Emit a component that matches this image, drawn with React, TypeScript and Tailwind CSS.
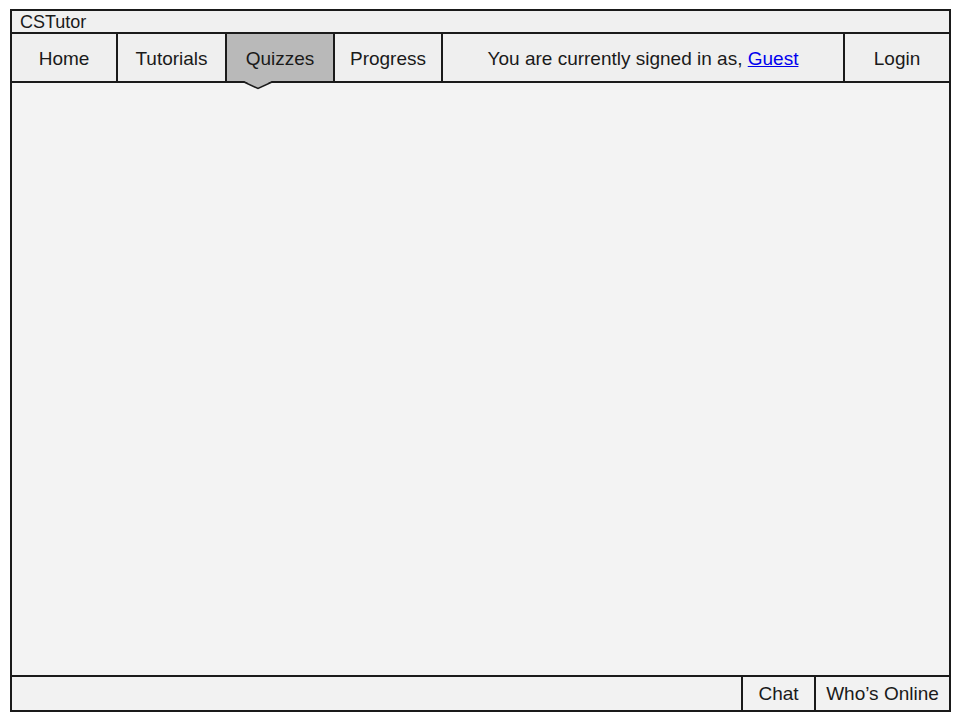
export default function App() {
  const tabs = [
    { label: 'Home', w: 'w-[106px]' },
    { label: 'Tutorials', w: 'w-[109px]' },
    { label: 'Quizzes', w: 'w-[108px]', active: true },
    { label: 'Progress', w: 'w-[108px]' },
  ]

  return (
    <div className="w-[960px] h-[720px] bg-white pt-[9px] pl-[10px] font-['Liberation_Sans',Arial,sans-serif] text-[#1a1a1a]">
      <div className="w-[941px] h-[703px] border-2 border-[#1a1a1a] bg-[#f3f3f3] flex flex-col">
        {/* title bar */}
        <div className="h-[23px] border-b-2 border-[#1a1a1a] bg-[#f0f0f0] pl-[8px] text-[18px] leading-[22px]">
          CSTutor
        </div>

        {/* nav */}
        <div className="h-[49px] flex border-b-2 border-[#1a1a1a] bg-[#efefef] relative z-10 pt-[3px]">
          {tabs.map((t) => (
            <div
              key={t.label}
              className={`${t.w} relative flex items-center justify-center border-r-2 border-[#1a1a1a] text-[19px] -mt-[3px] pt-[3px] ${
                t.active ? 'bg-[#b9b9b9]' : ''
              }`}
            >
              {t.label}
              {t.active && (
                <svg
                  className="absolute left-[16px] top-full"
                  width="30"
                  height="10"
                  viewBox="0 0 30 10"
                >
                  <polygon points="1,0 15,7 29,0" fill="#b9b9b9" />
                  <polyline points="1,1 15,7.5 29,1" fill="none" stroke="#1a1a1a" strokeWidth="1.5" />
                </svg>
              )}
            </div>
          ))}
          <div className="flex-1 flex items-center justify-center text-[19px]">
            You are currently signed in as,&nbsp;
            <span className="text-[#0000ee] underline">Guest</span>
          </div>
          <div className="w-[106px] flex items-center justify-center border-l-2 border-[#1a1a1a] text-[19px] -mt-[3px] pt-[3px]">
            Login
          </div>
        </div>

        {/* content */}
        <div className="flex-1" />

        {/* footer */}
        <div className="h-[35px] flex border-t-2 border-[#1a1a1a] bg-[#f2f2f2]">
          <div className="flex-1" />
          <div className="w-[73px] flex items-center justify-center border-l-2 border-[#1a1a1a] text-[19px] pt-[1px]">
            Chat
          </div>
          <div className="w-[135px] flex items-center justify-center border-l-2 border-[#1a1a1a] text-[19px] pt-[1px]">
            Who’s Online
          </div>
        </div>
      </div>
    </div>
  )
}
